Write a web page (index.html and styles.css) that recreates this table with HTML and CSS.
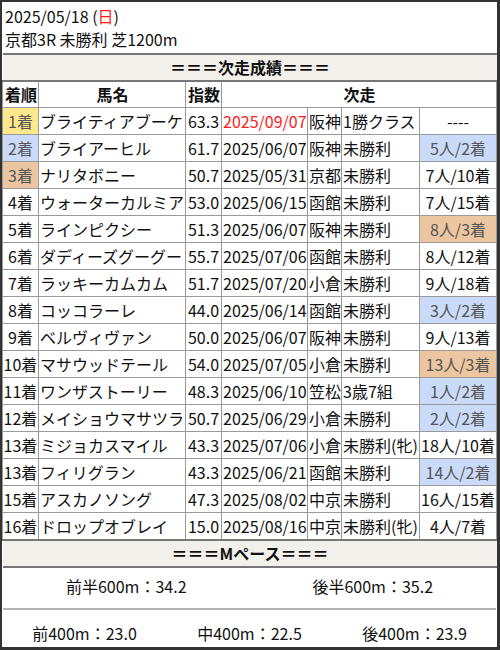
FILE: index.html
```html
<!DOCTYPE html>
<html lang="ja">
<head>
<meta charset="utf-8">
<link rel="stylesheet" href="styles.css">
</head>
<body>
<div class="frame">
  <div class="race-head">
    <div>2025/05/18 (<span class="red">日</span>)</div>
    <div>京都3R 未勝利 芝1200m</div>
  </div>
  <table class="results">
    <colgroup>
      <col class="c-rank"><col class="c-name"><col class="c-idx"><col class="c-date"><col class="c-place"><col class="c-race"><col class="c-res">
    </colgroup>
    <tr class="section"><th colspan="7">＝＝＝次走成績＝＝＝</th></tr>
    <tr class="cols"><th>着順</th><th>馬名</th><th>指数</th><th colspan="4">次走</th></tr>
    <tr><td class="rank gold">1着</td><td>ブライティアブーケ</td><td class="idx">63.3</td><td class="red">2025/09/07</td><td>阪神</td><td>1勝クラス</td><td class="res">----</td></tr>
    <tr><td class="rank blue">2着</td><td>ブライアーヒル</td><td class="idx">61.7</td><td>2025/06/07</td><td>阪神</td><td>未勝利</td><td class="res blue">5人/2着</td></tr>
    <tr><td class="rank tan">3着</td><td>ナリタボニー</td><td class="idx">50.7</td><td>2025/05/31</td><td>京都</td><td>未勝利</td><td class="res">7人/10着</td></tr>
    <tr><td class="rank">4着</td><td>ウォーターカルミア</td><td class="idx">53.0</td><td>2025/06/15</td><td>函館</td><td>未勝利</td><td class="res">7人/15着</td></tr>
    <tr><td class="rank">5着</td><td>ラインピクシー</td><td class="idx">51.3</td><td>2025/06/07</td><td>阪神</td><td>未勝利</td><td class="res tan">8人/3着</td></tr>
    <tr><td class="rank">6着</td><td>ダディーズグーグー</td><td class="idx">55.7</td><td>2025/07/06</td><td>函館</td><td>未勝利</td><td class="res">8人/12着</td></tr>
    <tr><td class="rank">7着</td><td>ラッキーカムカム</td><td class="idx">51.7</td><td>2025/07/20</td><td>小倉</td><td>未勝利</td><td class="res">9人/18着</td></tr>
    <tr><td class="rank">8着</td><td>コッコラーレ</td><td class="idx">44.0</td><td>2025/06/14</td><td>函館</td><td>未勝利</td><td class="res blue">3人/2着</td></tr>
    <tr><td class="rank">9着</td><td>ベルヴィヴァン</td><td class="idx">50.0</td><td>2025/06/07</td><td>阪神</td><td>未勝利</td><td class="res">9人/13着</td></tr>
    <tr><td class="rank">10着</td><td>マサウッドテール</td><td class="idx">54.0</td><td>2025/07/05</td><td>小倉</td><td>未勝利</td><td class="res tan">13人/3着</td></tr>
    <tr><td class="rank">11着</td><td>ワンザストーリー</td><td class="idx">48.3</td><td>2025/06/10</td><td>笠松</td><td>3歳7組</td><td class="res blue">1人/2着</td></tr>
    <tr><td class="rank">12着</td><td>メイショウマサツラ</td><td class="idx">50.7</td><td>2025/06/29</td><td>小倉</td><td>未勝利</td><td class="res blue">2人/2着</td></tr>
    <tr><td class="rank">13着</td><td>ミジョカスマイル</td><td class="idx">43.3</td><td>2025/07/06</td><td>小倉</td><td>未勝利(牝)</td><td class="res">18人/10着</td></tr>
    <tr><td class="rank">13着</td><td>フィリグラン</td><td class="idx">43.3</td><td>2025/06/21</td><td>函館</td><td>未勝利</td><td class="res blue">14人/2着</td></tr>
    <tr><td class="rank">15着</td><td>アスカノソング</td><td class="idx">47.3</td><td>2025/08/02</td><td>中京</td><td>未勝利</td><td class="res">16人/15着</td></tr>
    <tr><td class="rank">16着</td><td>ドロップオブレイ</td><td class="idx">15.0</td><td>2025/08/16</td><td>中京</td><td>未勝利(牝)</td><td class="res">4人/7着</td></tr>
    <tr class="section"><th colspan="7">＝＝＝Mペース＝＝＝</th></tr>
  </table>
  <div class="pace halves">
    <div>前半600m：34.2</div>
    <div>後半600m：35.2</div>
  </div>
  <div class="pace thirds">
    <div>前400m：23.0</div>
    <div>中400m：22.5</div>
    <div>後400m：23.9</div>
  </div>
</div>
</body>
</html>
```

FILE: styles.css
```css
html, body {
  margin: 0;
  padding: 0;
  background: #fff;
}
body {
  font-family: "Noto Sans CJK JP", "Noto Sans", sans-serif;
  font-size: 16px;
  color: #111;
}
.frame {
  box-sizing: border-box;
  width: 500px;
  height: 650px;
  border: 2px solid #333;
  border-right-width: 3px;
  border-bottom-width: 3px;
  overflow: hidden;
  background: #fff;
}
.race-head {
  padding: 3px 3px 2px 3px;
  line-height: 23px;
}
.red { color: #ff1a1a; }
.results {
  width: 100%;
  border-collapse: collapse;
  table-layout: fixed;
}
.c-rank { width: 36px; }
.c-name { width: 147px; }
.c-idx { width: 36px; }
.c-date { width: 86px; }
.c-place { width: 34px; }
.c-race { width: 78px; }
.c-res { width: 77px; }
.results td, .results th {
  border: 1px solid #9a9a9a;
  padding: 0 0 0 1px;
  line-height: 26px;
  white-space: nowrap;
  overflow: hidden;
  text-align: left;
}
.results th {
  font-weight: bold;
  text-align: center;
  line-height: 25px;
}
.results .section th {
  background: #f2f0eb;
  border-top: 2px solid #777;
  border-bottom: 2px solid #777;
  border-left: 0;
  border-right: 0;
}
.results td.rank, .results td.idx, .results td.res {
  text-align: center;
  padding: 0;
}
.results td.gold { background: #fde98b; color: #555; }
.results td.blue { background: #c9dbf9; color: #555; }
.results td.tan { background: #ebc6a0; color: #555; }
.pace {
  display: grid;
  text-align: center;
  line-height: 23px;
}
.halves {
  grid-template-columns: 1fr 1fr;
  padding: 7px 0 10px;
  border-bottom: 2px solid #b4b4b4;
  margin: 0 1px;
}
.thirds {
  grid-template-columns: 1fr 1fr 1fr;
  padding: 12px 0 0;
}
```
